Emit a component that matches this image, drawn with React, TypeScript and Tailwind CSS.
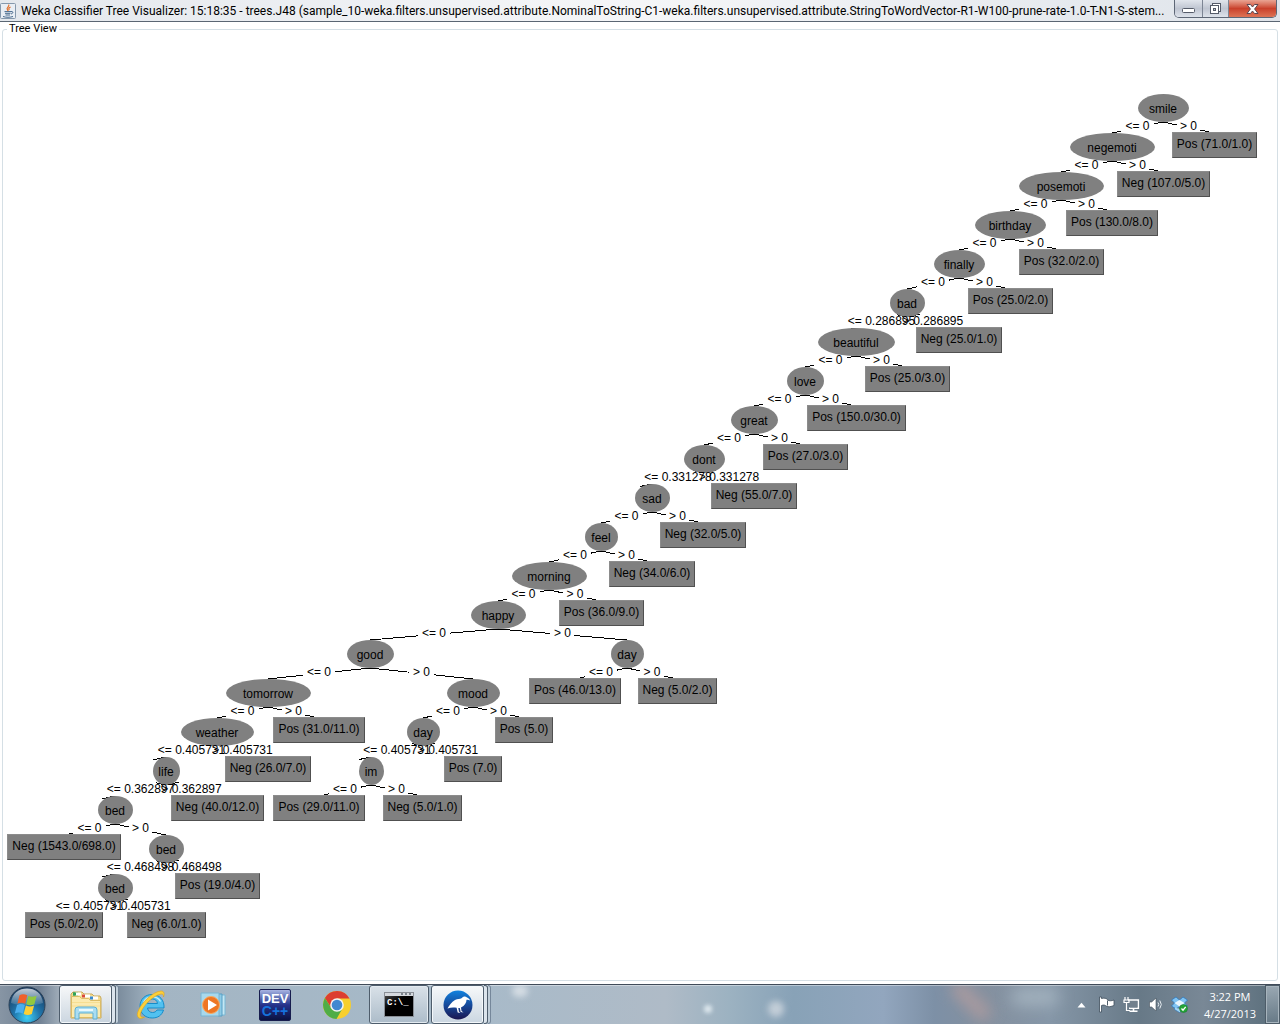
import type { ReactNode } from "react";

type TreeNode = {
  label: string;
  /** horizontal centre of the node */
  x: number;
  width: number;
  /** a node without children is a leaf */
  test?: string;
  left?: TreeNode;
  right?: TreeNode;
};

const leaf = (label: string, x: number, width: number): TreeNode => ({ label, x, width });

const split = (
  label: string,
  x: number,
  width: number,
  left: TreeNode,
  right: TreeNode,
  test = "0",
): TreeNode => ({ label, x, width, left, right, test });

const goodBranch = split(
  "good", 367, 48,
  split(
    "tomorrow", 265, 86,
    split(
      "weather", 214, 74,
      split(
        "life", 163, 28,
        split(
          "bed", 112, 36,
          leaf("Neg (1543.0/698.0)", 61, 114),
          split(
            "bed", 163, 36,
            split("bed", 112, 36, leaf("Pos (5.0/2.0)", 61, 78), leaf("Neg (6.0/1.0)", 163, 79), "0.405731"),
            leaf("Pos (19.0/4.0)", 214, 85),
            "0.468498",
          ),
        ),
        leaf("Neg (40.0/12.0)", 214, 93),
        "0.362897",
      ),
      leaf("Neg (26.0/7.0)", 265, 86),
      "0.405731",
    ),
    leaf("Pos (31.0/11.0)", 316, 92),
  ),
  split(
    "mood", 470, 54,
    split(
      "day", 420, 34,
      split("im", 368, 26, leaf("Pos (29.0/11.0)", 316, 92), leaf("Neg (5.0/1.0)", 419, 79)),
      leaf("Pos (7.0)", 470, 58),
      "0.405731",
    ),
    leaf("Pos (5.0)", 521, 58),
  ),
);

const happyBranch = split(
  "happy", 495, 56,
  goodBranch,
  split("day", 624, 34, leaf("Pos (46.0/13.0)", 572, 92), leaf("Neg (5.0/2.0)", 674, 79)),
);

const dontBranch = split(
  "dont", 701, 42,
  split(
    "sad", 649, 36,
    split(
      "feel", 598, 34,
      split("morning", 546, 76, happyBranch, leaf("Pos (36.0/9.0)", 598, 85)),
      leaf("Neg (34.0/6.0)", 649, 86),
    ),
    leaf("Neg (32.0/5.0)", 700, 86),
  ),
  leaf("Neg (55.0/7.0)", 751, 86),
  "0.331278",
);

const beautifulBranch = split(
  "beautiful", 853, 78,
  split(
    "love", 802, 38,
    split("great", 751, 48, dontBranch, leaf("Pos (27.0/3.0)", 802, 85)),
    leaf("Pos (150.0/30.0)", 853, 99),
  ),
  leaf("Pos (25.0/3.0)", 904, 85),
);

const root = split(
  "smile", 1160, 52,
  split(
    "negemoti", 1109, 86,
    split(
      "posemoti", 1058, 86,
      split(
        "birthday", 1007, 72,
        split(
          "finally", 956, 52,
          split("bad", 904, 36, beautifulBranch, leaf("Neg (25.0/1.0)", 956, 86), "0.286895"),
          leaf("Pos (25.0/2.0)", 1007, 85),
        ),
        leaf("Pos (32.0/2.0)", 1058, 85),
      ),
      leaf("Pos (130.0/8.0)", 1109, 92),
    ),
    leaf("Neg (107.0/5.0)", 1160, 93),
  ),
  leaf("Pos (71.0/1.0)", 1211, 85),
);

const TOP = 58;
const LEVEL_HEIGHT = 39;
const NODE_HEIGHT = 28;

type Placed = { node: TreeNode; y: number };
type Edge = { label: string; x1: number; y1: number; x2: number; y2: number; half: number };

const nodes: Placed[] = [];
const edges: Edge[] = [];

function place(node: TreeNode, level: number) {
  const y = TOP + level * LEVEL_HEIGHT;
  nodes.push({ node, y });
  const connect = (child: TreeNode, sign: string, shortHalf: number, longHalf: number) => {
    edges.push({
      label: `${sign} ${node.test}`,
      x1: node.x,
      y1: y + NODE_HEIGHT,
      x2: child.x,
      y2: y + LEVEL_HEIGHT,
      half: node.test === "0" ? shortHalf : longHalf,
    });
    place(child, level + 1);
  };
  if (node.left) connect(node.left, "<=", 16, 38);
  if (node.right) connect(node.right, ">", 12, 36);
}
place(root, 0);

function EdgeLines({ edge }: { edge: Edge }) {
  const { x1, y1, x2, y2, half } = edge;
  const dir = x2 > x1 ? 1 : -1;
  const mid = (x1 + x2) / 2;
  const yAt = (x: number) => y1 + ((x - x1) / (x2 - x1)) * (y2 - y1);
  const a = mid - dir * half;
  const b = mid + dir * half;
  return (
    <>
      <line x1={x1} y1={y1} x2={a} y2={yAt(a)} />
      <line x1={b} y1={yAt(b)} x2={x2} y2={y2} />
    </>
  );
}

function TreeCanvas() {
  return (
    <div className="relative h-[920px] min-w-[1262px] font-['Liberation_Sans',Arial,sans-serif] text-xs text-black">
      <svg className="absolute inset-0 h-full w-full" stroke="#000" strokeWidth="1" shapeRendering="crispEdges" aria-hidden="true">
        {edges.map((edge, i) => (
          <EdgeLines key={i} edge={edge} />
        ))}
      </svg>
      {nodes.map(({ node, y }, i) =>
        node.left ? (
          <div
            key={i}
            className="absolute flex h-7 items-center justify-center rounded-[50%] bg-[#808080] pt-0.5 pr-px"
            style={{ left: node.x - Math.floor(node.width / 2) + 1, top: y, width: node.width - 1 }}
          >
            {node.label}
          </div>
        ) : (
          <div
            key={i}
            className="absolute h-[26px] border border-t-[#8c8c8c] border-r-[#505050] border-b-[#505050] border-l-[#8c8c8c] bg-[#808080] pt-[3px] text-center whitespace-nowrap"
            style={{ left: node.x - Math.floor(node.width / 2), top: y - 1, width: node.width }}
          >
            {node.label}
          </div>
        ),
      )}
      {edges.map((edge, i) => (
        <span
          key={i}
          className="absolute -translate-x-1/2 whitespace-nowrap"
          style={{ left: (edge.x1 + edge.x2) / 2, top: edge.y1 - 4 }}
        >
          {edge.label}
        </span>
      ))}
    </div>
  );
}

function JavaIcon() {
  return (
    <svg viewBox="0 0 16 16" className="h-4 w-4 shrink-0" aria-hidden="true">
      <rect x=".5" y=".5" width="15" height="15" rx="1" fill="#e9eef4" stroke="#8598ac" />
      <path d="M8.6 1.5c1.6 2-3 3.200-1.200 5.200l.8 1.300M10.600 4c-2 1-2.300 1.800-1.200 3" fill="none" stroke="#e3702a" strokeWidth="1.200" />
      <path d="M4.500 8.600h6.500M5 10.300h5.500M5.500 12h4.500M11 8.600c2.500-.6 2.500 1.800 0 2.400M3 13.500c2.500 1 7.500 1 10 0" fill="none" stroke="#46688c" strokeWidth="1" />
    </svg>
  );
}

function TitleBar() {
  return (
    <header className="flex h-[22px] shrink-0 items-start border-b border-[#5b6673] bg-linear-to-r from-[#e4e8ed] via-[#f5f6f8] to-[#dfe4ea]">
      <h1 className="flex h-[21px] min-w-0 flex-1 items-center gap-[5px] overflow-hidden font-[Roboto,'Noto_Sans',sans-serif] text-xs whitespace-nowrap text-black">
        <JavaIcon />
        Weka Classifier Tree Visualizer: 15:18:35 - trees.J48 (sample_10-weka.filters.unsupervised.attribute.NominalToString-C1-weka.filters.unsupervised.attribute.StringToWordVector-R1-W100-prune-rate-1.0-T-N1-S-stem...
      </h1>
      <div className="mr-[3px] flex h-[18px] shrink-0 overflow-hidden rounded-b-[5px] border border-t-0 border-[#5d6675]">
        <button type="button" aria-label="Minimize" className="flex w-7 items-center justify-center border-r border-[#7c8594] bg-linear-to-b from-[#e1e5ec] via-[#bfc5d1] to-[#dde2ea] pt-1">
          <svg viewBox="0 0 13 5" className="h-[5px] w-[13px]" aria-hidden="true">
            <rect x=".5" y=".5" width="12" height="4" rx="1" fill="#fff" stroke="#555b69" />
          </svg>
        </button>
        <button type="button" aria-label="Restore" className="flex w-[26px] items-center justify-center border-r border-[#7c8594] bg-linear-to-b from-[#e1e5ec] via-[#bfc5d1] to-[#dde2ea]">
          <svg viewBox="0 0 13 13" className="h-[13px] w-[13px]" aria-hidden="true" stroke="#555b69">
            <rect x="3.500" y="1.500" width="8" height="8" fill="#fff" />
            <rect x="1.500" y="3.500" width="8" height="8" fill="#fff" />
            <rect x="4.500" y="6.500" width="2" height="2" fill="#bfc5d1" />
          </svg>
        </button>
        <button type="button" aria-label="Close" className="flex w-[47px] items-center justify-center bg-linear-to-b from-[#e9a493] via-[#c9402b] to-[#dd7355]">
          <svg viewBox="0 0 13 12" className="h-3 w-[13px]" aria-hidden="true">
            <path d="M1 1.500h3.500l2 2.500 2-2.500H12L8.600 6l3.400 4.500H8.500l-2-2.500-2 2.500H1L4.400 6z" fill="#fff" stroke="#5b4650" />
          </svg>
        </button>
      </div>
    </header>
  );
}

function WindowsOrb() {
  return (
    <svg viewBox="0 0 38 38" className="h-[38px] w-[38px]" aria-hidden="true">
      <defs>
        <radialGradient id="orb" cx=".5" cy=".85" r=".8">
          <stop offset="0" stopColor="#3fd0f5" />
          <stop offset=".45" stopColor="#2077ad" />
          <stop offset="1" stopColor="#17395f" />
        </radialGradient>
        <linearGradient id="orbShine" x2="0" y2="1">
          <stop offset="0" stopColor="#fff" stopOpacity=".75" />
          <stop offset="1" stopColor="#fff" stopOpacity=".1" />
        </linearGradient>
      </defs>
      <circle cx="19" cy="19" r="18" fill="url(#orb)" stroke="#2c4157" />
      <path d="M3 17C4 7 11 2.500 19 2.500S34 7 35 17c-8 3-24 3-32 0z" fill="url(#orbShine)" />
      <path d="M11.500 9.200c3-1.500 5.200-1 7.800.1l-2.100 8.400c-2.300-1.200-4.700-1.400-7.800-.2z" fill="#f0602b" />
      <path d="M20.300 9.900c2.500 1.100 5 1.100 8.300-.1l-2.200 8.500c-2.900 1.200-5.400 1.200-8.200 0z" fill="#92c83e" />
      <path d="M9 18.900c3.200-1.400 5.500-1 7.900.2l-2.200 8.500c-2.400-1.300-4.800-1.500-7.900-.2z" fill="#4aaeee" />
      <path d="M17.900 19.600c2.600 1.200 5.200 1.200 8.200 0l-2.300 8.400c-3 1.300-5.300 1.200-8.100 0z" fill="#fdd035" />
    </svg>
  );
}

function ExplorerIcon() {
  return (
    <svg viewBox="0 0 34 30" className="h-[30px] w-[34px]" aria-hidden="true">
      <path d="M2 28V4l2-2h9l2 2h8l2 2h6l1 2v20z" fill="#f4dc8e" stroke="#c9a95a" />
      <path d="M4 2.500h5v3H4z" fill="#2fa35a" />
      <path d="M6 2.500h6v3H6z" fill="#fff" />
      <path d="M4 2.500h3v3H4z" fill="#2fa35a" />
      <path d="M13 4.500h8v3h-8z" fill="#fff" />
      <path d="M13 4.500h3v3h-3z" fill="#d84b3a" />
      <path d="M21 6.500h8v3h-8z" fill="#fff" />
      <path d="M21 6.500h3v3h-3z" fill="#3a8bd0" />
      <path d="M2.500 6.500h8l2 2h7l2 2h10v17H2.500z" fill="#fbeab0" stroke="#dcbc66" />
      <path d="M3 12.500h28M3 16h28" stroke="#f6de92" />
      <path d="M6 29v-9q0-3 3-3h16q3 0 3 3v9h-4v-6H10v6z" fill="#a9ddf2" stroke="#5eafd3" />
      <path d="M10 20h14" stroke="#e9f9ff" strokeWidth="2" />
    </svg>
  );
}

function ExplorerBrowserIcon() {
  return (
    <svg viewBox="0 0 32 32" className="h-8 w-8" aria-hidden="true">
      <path d="M17 5.500c7.500 0 12.500 5.500 12 13.500H12.500c.5 3 2.500 4.500 5 4.500 2 0 3.500-.8 4.500-2.500h6.500c-1.700 5.500-5.800 8-11.300 8C10 29 5 24.300 5 17.300S10 5.500 17 5.500zm-4.700 9h10.200c-.4-3-2.400-4.500-5.100-4.500-2.600 0-4.600 1.500-5.100 4.500z" fill="#52c1f0" stroke="#168cc9" />
      <path d="M8.500 13.500C10 9.500 13 7.800 17 7.800c4 0 7 1.700 8.500 4.700" fill="none" stroke="#c5edfb" strokeWidth="1.300" />
      <path d="M28.500 8c1.300-3.500.7-6-2.500-6C19 2 5.500 13.500 2.500 24c-1 5 2.500 7 7 4-3.500.9-4.800-.8-3.800-4C8.300 16.500 18 6.500 26 5c1.700-.2 2.700.8 2.500 3z" fill="#fbcf3a" stroke="#dfa31a" strokeWidth=".6" />
    </svg>
  );
}

function MediaPlayerIcon() {
  return (
    <svg viewBox="0 0 28 26" className="h-[26px] w-7" aria-hidden="true">
      <path d="M21 3h5v20h-5z" fill="#c4e7f4" stroke="#79b8d5" />
      <path d="M19 2h4v22h-4z" fill="#8dcbe6" stroke="#589fc4" />
      <path d="M2 1h18v23H2z" fill="#a8d8ec" stroke="#79b4d2" />
      <circle cx="12" cy="13" r="8.500" fill="#ee7623" stroke="#f8ab63" />
      <path d="M9 7.500v11l9-5.500z" fill="#fff" />
    </svg>
  );
}

function DevCppIcon() {
  return (
    <span className="flex h-8 w-8 flex-col items-center justify-center rounded-[2px] border border-[#171d4e] bg-linear-to-b from-[#a9b4e2] via-[#26318b] to-[#0b1342] font-['Liberation_Sans',Arial,sans-serif] text-sm leading-[13px] font-bold">
      <span className="text-[13px] text-white">DEV</span>
      <span className="text-[#1672dc]">C++</span>
    </span>
  );
}

function ChromeIcon() {
  return (
    <svg viewBox="0 0 30 30" className="h-[30px] w-[30px]" aria-hidden="true">
      <circle cx="15" cy="15" r="14" fill="#f7cf2d" />
      <path d="M15 8.500H27.500A14 14 0 0 0 2.900 8L9.400 18.200z" fill="#dc3e30" />
      <path d="M2.900 8A14 14 0 0 0 14.500 29l6.100-10.700-11.200 0z" fill="#4fad46" />
      <circle cx="15" cy="15" r="6.800" fill="#f3f3f3" />
      <circle cx="15" cy="15" r="5.300" fill="#4288d0" />
    </svg>
  );
}

function ConsoleIcon() {
  return (
    <span className="flex h-[25px] w-[30px] flex-col border border-[#8a8f96] bg-black">
      <span className="flex h-[3px] justify-end gap-0.5 bg-[#d5d9de] pr-0.5">
        <i className="h-0.5 w-0.5 bg-[#7c858e]" />
        <i className="h-0.5 w-0.5 bg-[#7c858e]" />
        <i className="h-0.5 w-0.5 bg-[#7c858e]" />
      </span>
      <span className="flex-1 bg-linear-to-br from-[#444] to-black to-50% pl-0.5 text-left font-['Liberation_Mono','Courier_New',monospace] text-[9px] leading-[14px] font-bold whitespace-nowrap text-white">
        C:\_
      </span>
    </span>
  );
}

function WekaIcon() {
  return (
    <svg viewBox="0 0 30 30" className="h-[30px] w-[30px]" aria-hidden="true">
      <defs>
        <linearGradient id="weka" x2="0" y2="1">
          <stop offset="0" stopColor="#1182df" />
          <stop offset=".5" stopColor="#164a9b" />
          <stop offset="1" stopColor="#1b1650" />
        </linearGradient>
      </defs>
      <circle cx="15" cy="15" r="14.500" fill="url(#weka)" />
      <path d="M4.500 18.500c1.500-3 4-6.500 7.500-8.500 2.500-1.200 5-1 6.500-1.800 1.800-2 4-2.200 5.500-.7 1.500.6 2.500 1.500 3.200 3-1.500-.9-2.700-1-3.700-.7 0 3-1.800 6-5.500 7.700l.5 3.500 2 1.500-2.800-.4-.9-4h-1.500l.6 3.300 1.500 1.500-2.700-.4-1.100-4.700c-2.500-.4-5.600-.6-9.100.7z" fill="#fff" />
    </svg>
  );
}

function TaskButton({ label, children, state = "idle", stacked = false }: { label: string; children: ReactNode; state?: "idle" | "open" | "active"; stacked?: boolean }) {
  const look = {
    idle: "border-transparent",
    open: "border-[#4e5d6c] bg-linear-to-b from-[#dfe6ec]/90 to-[#aebdca]/80 shadow-[inset_0_0_0_1px_#e3eaf0]",
    active: "border-[#4e5d6c] bg-linear-to-b from-white/90 to-[#cfdae4]/90 shadow-[inset_0_0_0_1px_#f4f8fb]",
  }[state];
  return (
    <button type="button" aria-label={label} title={label} className="flex h-[39px] w-15">
      <span className={`flex h-full flex-1 items-center justify-center rounded-[3px] border ${look}`}>{children}</span>
      {stacked && (
        <>
          <span className="h-full w-1 rounded-r-[3px] border border-l-0 border-[#4e5d6c] bg-[#dbe4ec]" />
          <span className="h-full w-[3px] rounded-r-[3px] border border-l-0 border-[#75879a] bg-[#c0ced9]" />
        </>
      )}
    </button>
  );
}

function FlagIcon() {
  return (
    <svg viewBox="0 0 17 17" className="h-[17px] w-[17px]" aria-hidden="true">
      <path d="M1.500 1v15h2V9.500c2-.8 3.500-.5 4.500.5 2.500 1.500 5 .5 8-.5V4c-2.500 1-4.500 1-6 .2C8.500 2 6 1.800 3.500 2.500V1z" fill="#fff" stroke="#3e4c5a" strokeWidth=".8" />
      <path d="M9.500 4.500v5" stroke="#4f5d6a" />
    </svg>
  );
}

function NetworkIcon() {
  return (
    <svg viewBox="0 0 17 17" className="h-[17px] w-[17px]" aria-hidden="true" fill="none" stroke="#fff">
      <path d="M5 4h10.300v8.200H6M10.500 12.500V15M6.500 15.300h8" strokeWidth="1.600" />
      <path d="M2 1v3M5 1v3M1 4h5v2.500H1zM3.500 6.500v8H7" strokeWidth="1.200" />
      <rect x="7" y="5" width="7.500" height="6.500" fill="#71808d" stroke="none" />
    </svg>
  );
}

function VolumeIcon() {
  return (
    <svg viewBox="0 0 15 15" className="h-[15px] w-[15px]" aria-hidden="true">
      <path d="M1.500 5h2.200L8 1v13l-4.300-4H1.500z" fill="#fff" stroke="#44515d" strokeWidth=".6" />
      <path d="M10 5.500q1.500 2 0 4M11.800 3.500q3 4 0 8" fill="none" stroke="#e6ecf1" />
    </svg>
  );
}

function DropboxIcon() {
  return (
    <svg viewBox="0 0 17 17" className="h-[17px] w-[17px]" aria-hidden="true">
      <path d="m5 1 3.500 3L12 1l4.500 3-3 3 3 3-4.500 3-3.500-2.500L5 13 .5 10l3-3-3-3z" fill="#7fc3f2" stroke="#2674bb" strokeWidth=".7" />
      <path d="m8.500 4 5 3-5 3.500-5-3.500z" fill="#e8f5fd" />
      <path d="M3.500 11.500v2l5 3 4-2.500" fill="#a3d5f5" stroke="#2674bb" strokeWidth=".6" />
      <circle cx="12.500" cy="12.500" r="4" fill="#24a637" stroke="#16772a" strokeWidth=".5" />
      <path d="m10.500 12.500 1.500 1.700 2.700-3.400" fill="none" stroke="#fff" strokeWidth="1.300" />
    </svg>
  );
}

function Taskbar() {
  return (
    <footer className="relative flex h-10 shrink-0 items-stretch overflow-hidden border-t border-[#404b59] bg-[linear-gradient(90deg,#8795a4_0%,#6e7f92_3%,#aab6c1_5%,#78899a_9%,#a3b5c3_12%,#a7bac9_36%,#afbbc7_52%,#9cb2c1_57%,#88a2b7_62%,#92a6be_69%,#7d90a6_73%,#84909f_77%,#8697a8_82%,#677987_89%,#798896_94%,#596d7a_100%)]">
      <div className="pointer-events-none absolute inset-0" aria-hidden="true">
        <span className="absolute top-0 left-[40%] h-3 w-4 rounded-full bg-[#d5dde4] blur-[3px]" />
        <span className="absolute top-5 left-[55%] h-2 w-2 rounded-full bg-[#dfe9ef] blur-[2px]" />
        <span className="absolute top-4 left-[60%] h-4 w-4 rounded-full bg-[#c2cdd7] blur-[3px]" />
        <span className="absolute top-2 left-[74%] h-4 w-12 rotate-45 rounded-full bg-[#a89a9f] blur-[7px]" />
        <span className="absolute top-1 left-[79%] h-4 w-12 rounded-full bg-[#a5b4c0] blur-[8px]" />
        <span className="absolute inset-x-0 top-0 h-px bg-white/40" />
      </div>
      <button type="button" aria-label="Start" className="relative flex w-[54px] items-center justify-center">
        <WindowsOrb />
      </button>
      <nav aria-label="Taskbar" className="relative ml-[5px] flex flex-1 gap-0.5">
        <TaskButton label="Windows Explorer" state="active" stacked><ExplorerIcon /></TaskButton>
        <TaskButton label="Internet Explorer"><ExplorerBrowserIcon /></TaskButton>
        <TaskButton label="Windows Media Player"><MediaPlayerIcon /></TaskButton>
        <TaskButton label="Dev-C++"><DevCppIcon /></TaskButton>
        <TaskButton label="Google Chrome"><ChromeIcon /></TaskButton>
        <TaskButton label="Command Prompt" state="open"><ConsoleIcon /></TaskButton>
        <TaskButton label="Weka" state="active" stacked><WekaIcon /></TaskButton>
      </nav>
      <div className="relative flex items-center gap-2">
        <button type="button" aria-label="Show hidden icons" className="mr-1">
          <svg viewBox="0 0 9 6" className="h-1.5 w-[9px]" aria-hidden="true">
            <path d="M.5 5.500 4.500.8l4 4.700z" fill="#fff" />
          </svg>
        </button>
        <button type="button" aria-label="Action Center"><FlagIcon /></button>
        <button type="button" aria-label="Network"><NetworkIcon /></button>
        <button type="button" aria-label="Volume"><VolumeIcon /></button>
        <button type="button" aria-label="Dropbox"><DropboxIcon /></button>
      </div>
      <button type="button" className="relative mr-[9px] ml-4 text-center font-['Open_Sans','Noto_Sans',sans-serif] text-[11px] leading-[17px] text-white">
        <time className="block">3:22 PM</time>
        <time className="block">4/27/2013</time>
      </button>
      <button type="button" aria-label="Show desktop" className="relative w-[15px] border border-[#4d5c68] bg-linear-to-b from-[#a9b6c0]/80 to-[#6f818e]/60 shadow-[inset_0_0_0_1px_#a7b4bd]" />
    </footer>
  );
}

export default function App() {
  return (
    <div className="flex min-h-screen flex-col overflow-x-hidden bg-white">
      <TitleBar />
      <main className="flex flex-1 flex-col px-0.5 pb-[3px]">
        <fieldset className="flex-1 rounded-[3px] border border-[#d5dfe5]">
          <legend className="ml-1 px-0.5 font-[Roboto,'Noto_Sans',sans-serif] text-[11px] leading-[14px] text-black">Tree View</legend>
          <TreeCanvas />
        </fieldset>
      </main>
      <Taskbar />
    </div>
  );
}
